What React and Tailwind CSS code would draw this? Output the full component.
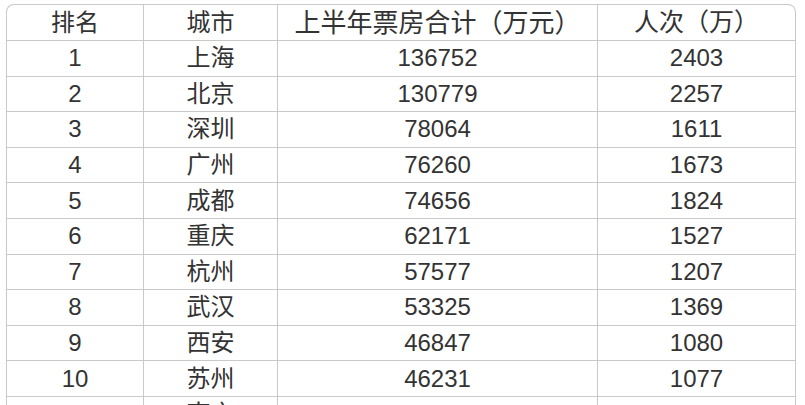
import React from "react";

// box office ranking, first half of the year
const rows = [
  ["1", "上海", "136752", "2403"],
  ["2", "北京", "130779", "2257"],
  ["3", "深圳", "78064", "1611"],
  ["4", "广州", "76260", "1673"],
  ["5", "成都", "74656", "1824"],
  ["6", "重庆", "62171", "1527"],
  ["7", "杭州", "57577", "1207"],
  ["8", "武汉", "53325", "1369"],
  ["9", "西安", "46847", "1080"],
  ["10", "苏州", "46231", "1077"],
  ["11", "南京", "45360", "1001"],
];

const cell =
  "flex items-center justify-center border-r border-b border-[#c9c9c9] leading-none";

function App() {
  return (
    <div className="w-[805px] h-[405px] overflow-hidden bg-white pt-[4px] pl-[6px]">
      <div
        className="w-[790px] border-l border-t border-[#c9c9c9] rounded-tl-[8px] rounded-tr-[8px] text-[#333333] text-[24px]"
        style={{ fontFamily: '"Liberation Sans", "Noto Sans CJK SC", sans-serif' }}
      >
        <div className="grid grid-cols-[137px_134px_320px_198px] h-[36px]">
          <div className={cell}>排名</div>
          <div className={cell}>城市</div>
          <div className={cell + " text-[26px]"}>上半年票房合计（万元）</div>
          <div className={cell + " text-[25px] rounded-tr-[8px]"}>人次（万）</div>
        </div>
        {rows.map((r) => (
          <div key={r[0]} className="grid grid-cols-[137px_134px_320px_198px] h-[35.6px]">
            <div className={cell}>{r[0]}</div>
            <div className={cell}>{r[1]}</div>
            <div className={cell}>{r[2]}</div>
            <div className={cell}>{r[3]}</div>
          </div>
        ))}
      </div>
    </div>
  );
}

export default App;
